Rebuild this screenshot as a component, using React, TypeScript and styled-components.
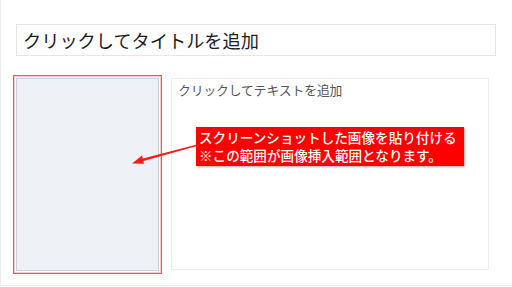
import React from 'react';
import styled, { createGlobalStyle } from 'styled-components';

const Global = createGlobalStyle`
  html, body {
    margin: 0;
    padding: 0;
    background: #fff;
    font-family: "Noto Sans CJK JP", "Noto Sans", sans-serif;
  }
`;

const Slide = styled.div`
  position: relative;
  box-sizing: border-box;
  width: 512px;
  height: 286px;
  padding: 24px 16px 0 12px;
  border-left: 1px solid #ececec;
  border-bottom: 1px solid #ececec;
  overflow: hidden;
`;

const TitleBox = styled.div`
  box-sizing: border-box;
  width: 480px;
  height: 32px;
  margin-left: 3px;
  padding-left: 6px;
  border: 1px solid #e6e6e6;
  display: flex;
  align-items: center;
  font-size: 18.2px;
  color: #1c1c1c;
`;

const Row = styled.div`
  display: flex;
  align-items: flex-start;
  gap: 9px;
  margin-top: 19px;
`;

const ImageFrame = styled.div`
  box-sizing: border-box;
  width: 149px;
  height: 199px;
  border: 1px solid #ff5252;
  box-shadow: inset 0 0 0 1px #ffc8c8;
  padding: 2px;
`;

const ImageArea = styled.div`
  box-sizing: border-box;
  width: 100%;
  height: 100%;
  background: #eef2f7;
  border: 1px solid #cdd1d6;
`;

const TextBox = styled.div`
  box-sizing: border-box;
  width: 318px;
  height: 192px;
  margin-top: 3px;
  padding: 2px 6px;
  border: 1px solid #ececec;
  font-size: 12.8px;
  line-height: 18px;
  color: #555;
  letter-spacing: -0.1px;
`;

const Callout = styled.div`
  position: absolute;
  left: 195px;
  top: 127px;
  box-sizing: border-box;
  width: 268px;
  height: 39px;
  padding: 1px 3px;
  background: #ff0000;
  color: #fff;
  font-size: 13.6px;
  font-weight: 500;
  line-height: 18px;
  white-space: nowrap;
  box-shadow: 1px 1px 2px rgba(0, 0, 0, 0.35);
`;

const ArrowLayer = styled.svg`
  position: absolute;
  left: 0;
  top: 0;
  pointer-events: none;
`;

const App = () => {
  return (
    <>
      <Global />
      <Slide>
        <TitleBox>クリックしてタイトルを追加</TitleBox>
        <Row>
          <ImageFrame>
            <ImageArea />
          </ImageFrame>
          <TextBox>クリックしてテキストを追加</TextBox>
        </Row>
        <ArrowLayer width="512" height="286" viewBox="0 0 512 286">
          <polygon points="196,144.5 140,159 140.8,161.5 196,146" fill="#ff1a1a" />
          <polygon points="131,163.5 141,155.5 143,163.8" fill="#ff1a1a" />
        </ArrowLayer>
        <Callout>
          スクリーンショットした画像を貼り付ける
          <br />
          ※この範囲が画像挿入範囲となります。
        </Callout>
      </Slide>
    </>
  );
};

export default App;
